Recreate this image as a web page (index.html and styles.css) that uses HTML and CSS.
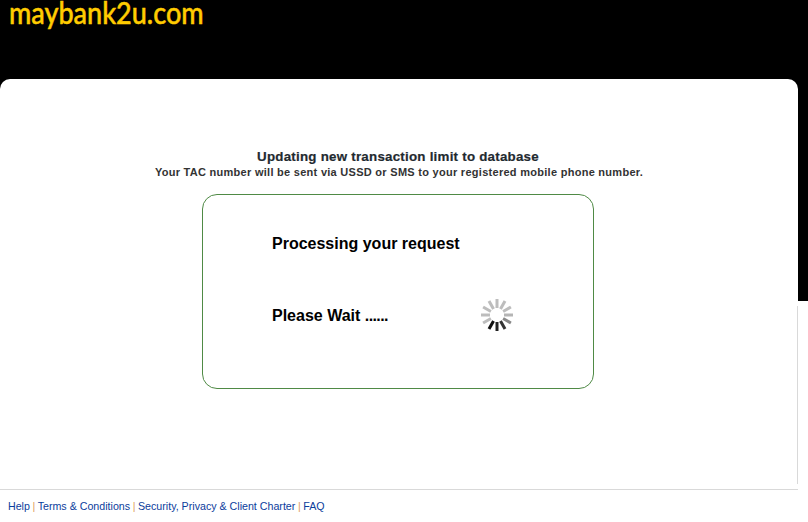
FILE: index.html
```html
<!DOCTYPE html>
<html lang="en">
<head>
    <meta charset="UTF-8">
    <meta name="viewport" content="width=device-width, initial-scale=1.0">
    <title>Maybank2u - Processing</title>
    <link rel="stylesheet" href="styles.css">
</head>
<body>
    <div class="backdrop"></div>
    <header class="site-header">
        <div class="logo">maybank2u.com</div>
    </header>

    <main class="panel">
        <div class="panel-edge"></div>
        <div class="intro">
            <h1>Updating new transaction limit to database</h1>
            <p>Your TAC number will be sent via USSD or SMS to your registered mobile phone number.</p>
        </div>
        <div class="wait-box">
            <div class="wait-title">Processing your request</div>
            <div class="wait-row">
                <span class="wait-text">Please Wait <span class="dots">......</span></span>
                <svg class="spinner" width="36" height="36" viewBox="-18 -18 36 36" aria-hidden="true">
                    <g stroke-width="3" stroke-linecap="butt">
                        <line x1="0" y1="-7" x2="0" y2="-16" stroke="#bdbdbd"/>
                        <line x1="3.5" y1="-6.1" x2="8" y2="-13.9" stroke="#bdbdbd"/>
                        <line x1="6.1" y1="-3.5" x2="13.9" y2="-8" stroke="#bdbdbd"/>
                        <line x1="7" y1="0" x2="16" y2="0" stroke="#b5b5b5"/>
                        <line x1="6.1" y1="3.5" x2="13.9" y2="8" stroke="#888888"/>
                        <line x1="3.5" y1="6.1" x2="8" y2="13.9" stroke="#333333"/>
                        <line x1="0" y1="7" x2="0" y2="16" stroke="#222222"/>
                        <line x1="-3.5" y1="6.1" x2="-8" y2="13.9" stroke="#111111"/>
                        <line x1="-6.1" y1="3.5" x2="-13.9" y2="8" stroke="#bdbdbd"/>
                        <line x1="-7" y1="0" x2="-16" y2="0" stroke="#bdbdbd"/>
                        <line x1="-6.1" y1="-3.5" x2="-13.9" y2="-8" stroke="#bdbdbd"/>
                        <line x1="-3.5" y1="-6.1" x2="-8" y2="-13.9" stroke="#bdbdbd"/>
                    </g>
                </svg>
            </div>
        </div>
        <footer class="site-footer">
            <a href="#">Help</a> <span class="sep">|</span>
            <a href="#">Terms &amp; Conditions</a> <span class="sep">|</span>
            <a href="#">Security, Privacy &amp; Client Charter</a> <span class="sep">|</span>
            <a href="#">FAQ</a>
        </footer>
    </main>
</body>
</html>
```

FILE: styles.css
```css
html, body {
    margin: 0;
    padding: 0;
}
body {
    position: relative;
    height: 522px;
    overflow: hidden;
    background-color: #ffffff;
    font-family: "Liberation Sans", Arial, sans-serif;
}
.backdrop {
    position: absolute;
    top: 0;
    left: 0;
    right: 0;
    height: 301px;
    background-color: #000000;
}
.site-header {
    position: relative;
    height: 79px;
    padding-left: 9px;
}
.logo {
    font-family: "Lato", sans-serif;
    font-size: 31.5px;
    line-height: 24px;
    font-weight: 500;
    -webkit-text-stroke: 0.5px #ffcc00;
    color: #ffcc00;
    white-space: nowrap;
    transform: scaleX(0.857);
    transform-origin: left top;
}
.panel {
    position: relative;
    display: flex;
    flex-direction: column;
    width: 798px;
    height: 443px;
    background-color: #ffffff;
    border-radius: 10px 10px 0 0;
}
.panel-edge {
    position: absolute;
    top: 227px;
    right: 0;
    height: 178px;
    width: 1px;
    background-color: #d9d9d9;
}
.intro {
    padding-top: 70px;
    text-align: center;
    color: #333333;
}
.intro h1 {
    margin: 0;
    padding-right: 2px;
    font-size: 13.33px;
    line-height: 15px;
    font-weight: bold;
    letter-spacing: 0.24px;
    color: #1f2a30;
    -webkit-text-stroke: 0.2px #1f2a30;
}
.intro p {
    margin: 1px 0 0;
    font-size: 11px;
    line-height: 14px;
    font-weight: bold;
    letter-spacing: 0.28px;
}
.wait-box {
    box-sizing: border-box;
    width: 392px;
    height: 195px;
    margin: 15px 0 0 202px;
    padding: 40px 69px 0;
    border: 1px solid #4f8a45;
    border-radius: 15px;
    color: #000000;
    font-size: 16px;
    font-weight: bold;
}
.wait-title {
    line-height: 18px;
}
.wait-row {
    display: flex;
    align-items: center;
    justify-content: space-between;
    margin-top: 44px;
    padding-right: 9px;
    height: 36px;
}
.wait-text {
    position: relative;
    top: 1px;
}
.dots {
    letter-spacing: -0.6px;
}
.site-footer {
    margin-top: auto;
    height: 33px;
    padding: 8px 0 0 8px;
    box-sizing: border-box;
    border-top: 1px solid #d9d9d9;
    font-size: 10.67px;
    line-height: 16px;
}
.site-footer a {
    color: #0b3d9c;
    text-decoration: none;
}
.sep {
    margin: 0 -0.4px;
    color: #e0a060;
}
```
